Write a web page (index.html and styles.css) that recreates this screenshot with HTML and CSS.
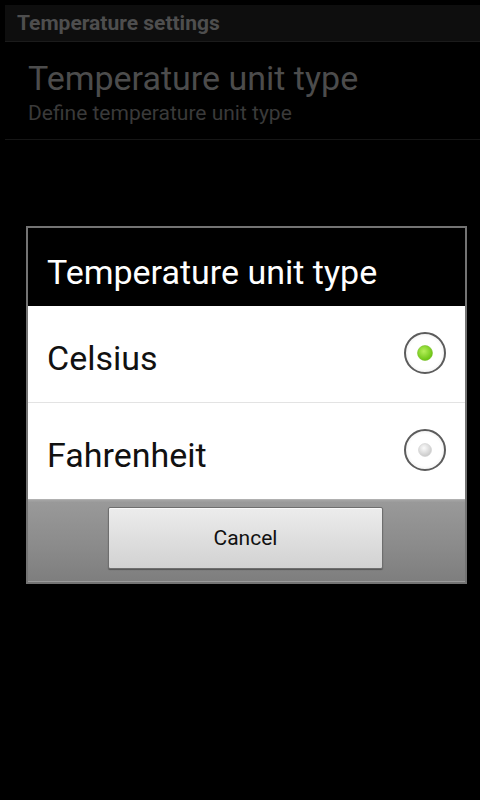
FILE: index.html
```html
<!DOCTYPE html>
<html>
<head>
<meta charset="utf-8">
<link rel="stylesheet" href="styles.css">
</head>
<body>
<div class="screen">
  <div class="titlebar">Temperature settings</div>
  <div class="pref">
    <div class="pref-title">Temperature unit type</div>
    <div class="pref-summary">Define temperature unit type</div>
  </div>

  <div class="dialog">
    <div class="dialog-title">Temperature unit type</div>
    <div class="options">
      <div class="option option-divided">
        <span class="option-label">Celsius</span>
        <svg class="radio" width="46" height="46" viewBox="0 0 46 46">
          <defs>
            <radialGradient id="gOn" cx="0.42" cy="0.38" r="0.6">
              <stop offset="0" stop-color="#b6f05a"/>
              <stop offset="1" stop-color="#6cc414"/>
            </radialGradient>
            <radialGradient id="ring" cx="0.5" cy="0.5" r="0.5">
              <stop offset="0.8" stop-color="#ffffff"/>
              <stop offset="1" stop-color="#f2f2f2"/>
            </radialGradient>
          </defs>
          <circle cx="23" cy="23" r="20" fill="url(#ring)" stroke="#5c5c5c" stroke-width="2"/>
          <circle cx="23" cy="23" r="7.5" fill="url(#gOn)" stroke="#7cc02e" stroke-width="0.6"/>
        </svg>
      </div>
      <div class="option">
        <span class="option-label">Fahrenheit</span>
        <svg class="radio" width="46" height="46" viewBox="0 0 46 46">
          <defs>
            <radialGradient id="gOff" cx="0.42" cy="0.35" r="0.65">
              <stop offset="0" stop-color="#fafafa"/>
              <stop offset="1" stop-color="#c9c9c9"/>
            </radialGradient>
          </defs>
          <circle cx="23" cy="23" r="20" fill="url(#ring)" stroke="#5c5c5c" stroke-width="2"/>
          <circle cx="23" cy="23" r="6.5" fill="url(#gOff)" stroke="#d0d0d0" stroke-width="0.6"/>
        </svg>
      </div>
    </div>
    <div class="buttonbar">
      <button class="btn" type="button">Cancel</button>
    </div>
  </div>
</div>
</body>
</html>
```

FILE: styles.css
```css
html, body {
  margin: 0;
  padding: 0;
  background: #000;
}

.screen {
  position: relative;
  width: 480px;
  height: 800px;
  background: #000;
  font-family: Roboto, "Noto Sans", "Liberation Sans", sans-serif;
  overflow: hidden;
}

.titlebar {
  margin: 5px 0 0 5px;
  height: 36px;
  background: #0e0e0e;
  border-bottom: 1px solid #1b1b1b;
  color: #4e4e4e;
  font-weight: bold;
  font-size: 21px;
  line-height: 36px;
  padding-left: 12px;
  box-sizing: content-box;
}

.pref {
  margin-left: 5px;
  padding: 16px 0 13px 23px;
  border-bottom: 1px solid #161616;
}

.pref-title {
  color: #4c4c4c;
  font-size: 34px;
  line-height: 40px;
}

.pref-summary {
  margin-top: 2px;
  color: #3a3a3a;
  font-size: 21px;
  line-height: 26px;
}

.dialog {
  position: absolute;
  left: 26px;
  top: 226px;
  width: 437px;
  border: 2px solid #737373;
  background: #000;
}

.dialog-title {
  height: 69px;
  padding: 9px 0 0 19px;
  display: flex;
  align-items: center;
  color: #fff;
  font-size: 34px;
  line-height: 40px;
}

.options {
  background: #fff;
}

.option {
  height: 96px;
  display: flex;
  align-items: center;
  justify-content: space-between;
  padding: 0 17px 0 19px;
}

.option-divided {
  height: 97px;
  border-bottom: 1px solid #e3e3e3;
  box-sizing: border-box;
}

.option-label {
  color: #111;
  font-size: 34px;
  line-height: 40px;
  padding-top: 8px;
}

.radio {
  display: block;
  margin-top: -2px;
}

.buttonbar {
  height: 83px;
  box-sizing: border-box;
  padding-top: 7px;
  display: flex;
  justify-content: center;
  align-items: flex-start;
  background: linear-gradient(#a2a2a2 0, #a2a2a2 1px, #999 2px, #8a8a8a 60%, #7e7e7e 100%);
  border-top: 1px solid #b0b0b0;
  border-bottom: 1px solid #9a9a9a;
}

.btn {
  width: 275px;
  height: 62px;
  margin-left: -2px;
  border: 1px solid #6e6e6e;
  border-radius: 2px;
  background: linear-gradient(#ececec, #d2d2d2);
  box-shadow: 0 1px 1px rgba(0,0,0,0.35), inset 0 1px 0 #f7f7f7;
  color: #111;
  font-family: Roboto, "Noto Sans", "Liberation Sans", sans-serif;
  font-size: 21px;
  padding: 0;
}
```
